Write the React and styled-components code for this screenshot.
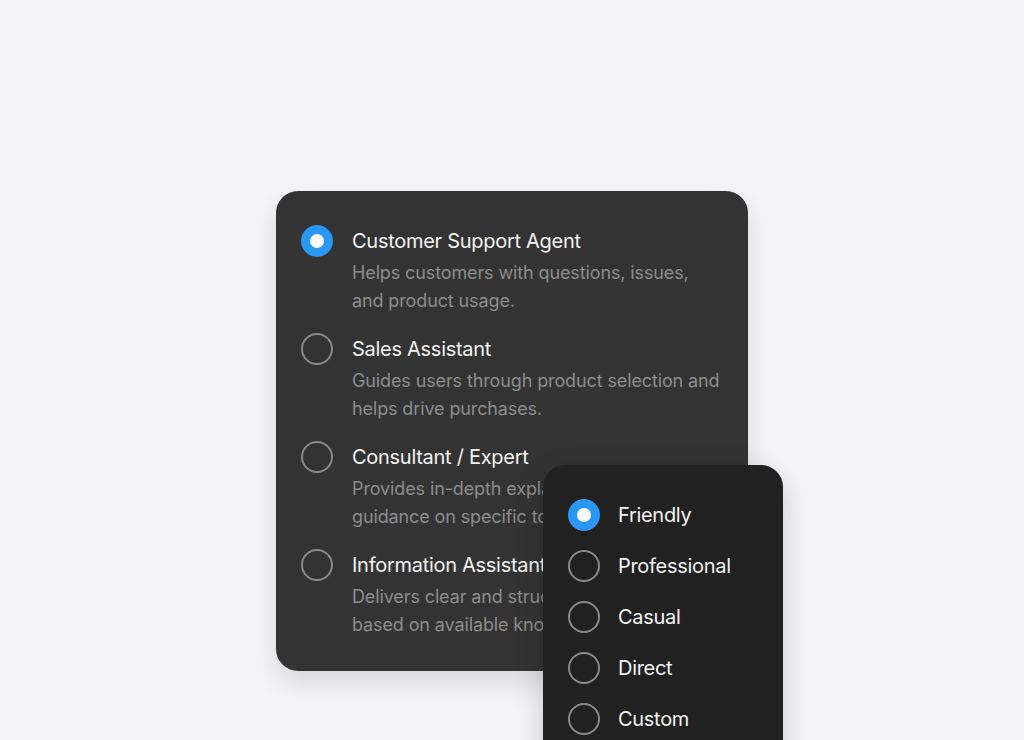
import React from 'react'
import styled, { createGlobalStyle } from 'styled-components'

const GlobalStyle = createGlobalStyle`
  html, body {
    margin: 0;
    padding: 0;
    background: #f5f5f7;
    overflow: hidden;
  }
  body {
    font-family: Inter, "Noto Sans", sans-serif;
    -webkit-font-smoothing: antialiased;
  }
`

const Page = styled.div`
  height: 740px;
  display: flex;
  justify-content: center;
  padding-top: 191px;
  box-sizing: border-box;
`

const Stage = styled.div`
  position: relative;
  width: 472px;
`

const RoleCard = styled.div`
  background: #333333;
  border-radius: 22px;
  padding: 34px 25px 32px;
  display: flex;
  flex-direction: column;
  gap: 18px;
  box-shadow: 0 12px 28px rgba(0, 0, 0, 0.12);
`

const RoleRow = styled.div`
  display: flex;
  gap: 19px;
  align-items: flex-start;
`

const Radio = styled.span`
  flex: none;
  width: 32px;
  height: 32px;
  border-radius: 50%;
  box-sizing: border-box;
  border: ${(p) => (p.$checked ? '9px solid #2997f5' : '2px solid #8a8a8a')};
  background: ${(p) => (p.$checked ? '#ffffff' : 'transparent')};
`

const RoleText = styled.div`
  display: flex;
  flex-direction: column;
  white-space: nowrap;
`

const RoleTitle = styled.div`
  color: #f4f4f4;
  font-size: 20px;
  line-height: 32px;
  letter-spacing: -0.28px;
`

const RoleDesc = styled.div`
  margin-top: 2px;
  color: #8d8d8d;
  font-size: 18px;
  line-height: 28px;
  letter-spacing: -0.12px;
`

const ToneCard = styled.div`
  position: absolute;
  left: 267px;
  top: 274px;
  width: 240px;
  height: 320px;
  background: #212121;
  border-radius: 22px;
  padding: 34px 25px;
  box-sizing: border-box;
  display: flex;
  flex-direction: column;
  gap: 19px;
  box-shadow: 0 10px 30px rgba(0, 0, 0, 0.18);
`

const ToneRow = styled.div`
  display: flex;
  align-items: center;
  gap: 18px;
`

const ToneLabel = styled.span`
  color: #f4f4f4;
  font-size: 20px;
  line-height: 32px;
  letter-spacing: -0.3px;
`

const roles = [
  {
    title: 'Customer Support Agent',
    desc: 'Helps customers with questions, issues,\nand product usage.',
    checked: true,
  },
  {
    title: 'Sales Assistant',
    desc: 'Guides users through product selection and\nhelps drive purchases.',
  },
  {
    title: 'Consultant / Expert',
    desc: 'Provides in-depth explanations and\nguidance on specific topics.',
  },
  {
    title: 'Information Assistant',
    desc: 'Delivers clear and structured answers\nbased on available knowledge.',
  },
]

const tones = ['Friendly', 'Professional', 'Casual', 'Direct', 'Custom']

export default function App() {
  return (
    <>
      <GlobalStyle />
      <Page>
        <Stage>
          <RoleCard>
            {roles.map((r) => (
              <RoleRow key={r.title}>
                <Radio $checked={r.checked} />
                <RoleText>
                  <RoleTitle>{r.title}</RoleTitle>
                  <RoleDesc>
                    {r.desc.split('\n').map((line) => (
                      <div key={line}>{line}</div>
                    ))}
                  </RoleDesc>
                </RoleText>
              </RoleRow>
            ))}
          </RoleCard>
          <ToneCard>
            {tones.map((t, i) => (
              <ToneRow key={t}>
                <Radio $checked={i === 0} />
                <ToneLabel>{t}</ToneLabel>
              </ToneRow>
            ))}
          </ToneCard>
        </Stage>
      </Page>
    </>
  )
}
